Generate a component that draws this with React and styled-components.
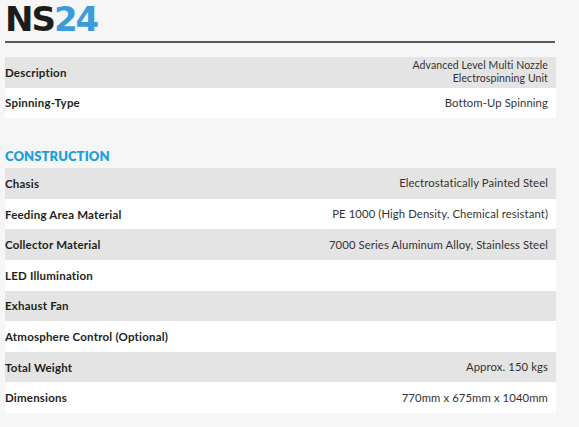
import styled, { createGlobalStyle } from 'styled-components';

const GlobalStyle = createGlobalStyle`
  html, body {
    margin: 0;
    padding: 0;
    background: #f6f6f6;
  }
  body {
    font-family: "Lato", "DejaVu Sans", sans-serif;
  }
`;

const general = [
  { label: 'Description', value: ['Advanced Level Multi Nozzle', 'Electrospinning Unit'] },
  { label: 'Spinning-Type', value: ['Bottom-Up Spinning'] },
];

const construction = [
  { label: 'Chasis', value: ['Electrostatically Painted Steel'] },
  { label: 'Feeding Area Material', value: ['PE 1000 (High Density, Chemical resistant)'] },
  { label: 'Collector Material', value: ['7000 Series Aluminum Alloy, Stainless Steel'] },
  { label: 'LED Illumination', value: [] },
  { label: 'Exhaust Fan', value: [] },
  { label: 'Atmosphere Control (Optional)', value: [] },
  { label: 'Total Weight', value: ['Approx. 150 kgs'] },
  { label: 'Dimensions', value: ['770mm x 675mm x 1040mm'] },
];

function SpecTable({ rows }) {
  return (
    <StTable>
      {rows.map((row, i) => (
        <StRow key={row.label} shaded={i % 2 === 0 ? 1 : 0}>
          <StLabel>{row.label}</StLabel>
          <StValue small={row.value.length > 1 ? 1 : 0}>
            {row.value.map((line) => (
              <span key={line}>{line}</span>
            ))}
          </StValue>
        </StRow>
      ))}
    </StTable>
  );
}

function App() {
  return (
    <>
      <GlobalStyle />
      <StWrapper>
        <StTitle>
          NS<StBlue>24</StBlue>
        </StTitle>
        <StDivider />
        <SpecTable rows={general} />
        <StSection>CONSTRUCTION</StSection>
        <SpecTable rows={construction} />
      </StWrapper>
    </>
  );
}

export default App;

const StWrapper = styled.div`
  width: 551px;
  padding: 0 0 0 5px;
  display: flex;
  flex-direction: column;
`;

const StTitle = styled.h1`
  margin: 0;
  height: 39px;
  font-family: "DejaVu Sans", sans-serif;
  font-weight: 700;
  font-size: 34px;
  line-height: 39px;
  letter-spacing: -2px;
  color: #1c1c1c;
`;

const StBlue = styled.span`
  color: #3b9bdb;
`;

const StDivider = styled.div`
  height: 2px;
  width: 550px;
  background: #5a5a5a;
  margin-top: 2px;
  margin-bottom: 14px;
`;

const StTable = styled.div`
  display: flex;
  flex-direction: column;
`;

const StRow = styled.div`
  height: 30.6px;
  display: flex;
  align-items: center;
  justify-content: space-between;
  padding: 0 8px 0 0;
  background: ${(props) => (props.shaded ? '#e4e4e4' : '#ffffff')};
`;

const StLabel = styled.span`
  font-weight: 700;
  font-size: 11.5px;
  color: #231f20;
  letter-spacing: 0.2px;
`;

const StValue = styled.div`
  display: flex;
  flex-direction: column;
  align-items: flex-end;
  font-size: ${(props) => (props.small ? '10.5px' : '11.3px')};
  line-height: ${(props) => (props.small ? '13px' : '14px')};
  color: #333333;
  text-align: right;
  letter-spacing: 0.1px;
`;

const StSection = styled.h2`
  margin: 30px 0 0;
  height: 20px;
  font-size: 13px;
  font-weight: 800;
  color: #1c9fde;
  letter-spacing: 0.1px;
`;
